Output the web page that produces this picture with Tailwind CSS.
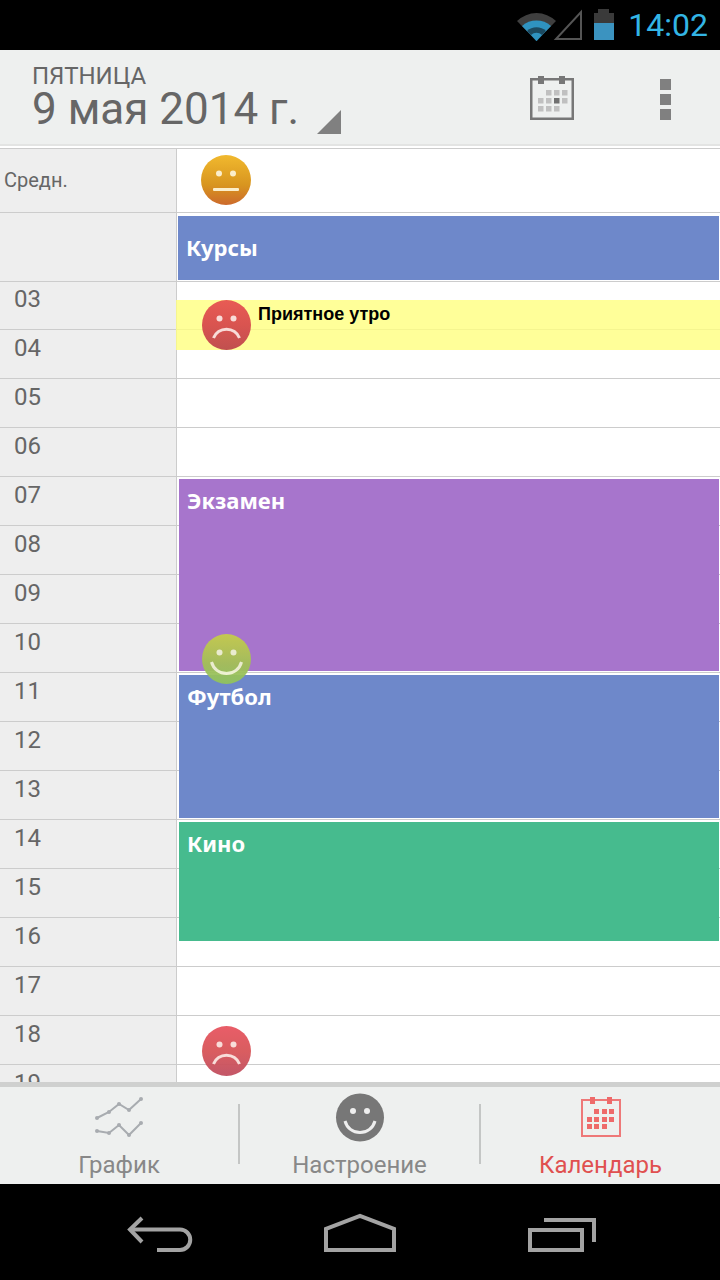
<!DOCTYPE html>
<html lang="ru">
<head>
  <meta charset="UTF-8" />
  <title>Календарь</title>
  <script src="https://cdn.jsdelivr.net/npm/@tailwindcss/browser@4"></script>
</head>
<body class="bg-black font-['Roboto',sans-serif]">
<div class="w-[720px] h-[1280px] flex flex-col overflow-hidden">

  <!-- status bar -->
  <div class="h-[50px] bg-black flex items-center justify-end pr-[12px] shrink-0">
    <svg width="120" height="50" viewBox="510 0 120 50" class="mr-[-6px]">
      <path d="M517 21 A28 28 0 0 1 556 21 L536.500 41 Z" fill="#3f3f3f"/>
      <path d="M522 26 A22 22 0 0 1 551 26 L536.500 41 Z" fill="#2f93c0"/>
      <path d="M527 31 A14 14 0 0 1 546 31 L536.500 41 Z" fill="#1c4a60"/>
      <path d="M531 35 A8 8 0 0 1 542 35 L536.500 41 Z" fill="#2f93c0"/>
      <path d="M581 12 V39 H556 Z" fill="none" stroke="#555" stroke-width="2"/>
      <rect x="598" y="9" width="11" height="4" fill="#3a3a3a"/>
      <rect x="594" y="13" width="20" height="10" fill="#3a3a3a"/>
      <rect x="594" y="23" width="20" height="17" fill="#3b93c0"/>
    </svg>
    <span class="text-[32px] font-normal text-[#33b5e5] leading-none ml-[4px]">14:02</span>
  </div>

  <!-- date header -->
  <div class="h-[94px] bg-[#eef0ef] flex items-start shrink-0 relative">
    <div class="pl-[32px] pt-[13px] text-[#666]">
      <div class="text-[24px] leading-[26px]">ПЯТНИЦА</div>
      <div class="text-[44px] leading-[40px] flex items-end">9 мая 2014 г.</div>
    </div>
    <svg width="24" height="24" class="mt-[60px] ml-[18px]"><path d="M24 0V24H0Z" fill="#808080"/></svg>
    <svg width="46" height="46" viewBox="0 0 46 46" class="absolute left-[529px] top-[25px]">
      <rect x="2.250" y="4.250" width="41.500" height="39.500" fill="none" stroke="#777" stroke-width="2.500"/>
      <rect x="9" y="1" width="6" height="8" fill="#777"/><rect x="30" y="1" width="6" height="8" fill="#777"/>
      <g fill="#c0c0c0">
        <rect x="17" y="15" width="5.500" height="5.500"/><rect x="25" y="15" width="5.500" height="5.500"/><rect x="33" y="15" width="5.500" height="5.500"/>
        <rect x="9" y="23" width="5.500" height="5.500"/><rect x="17" y="23" width="5.500" height="5.500"/><rect x="25" y="23" width="5.500" height="5.500" fill="#707070"/><rect x="33" y="23" width="5.500" height="5.500"/>
        <rect x="9" y="31" width="5.500" height="5.500"/><rect x="17" y="31" width="5.500" height="5.500"/><rect x="25" y="31" width="5.500" height="5.500"/>
      </g>
    </svg>
    <div class="absolute left-[660px] top-[29px] flex flex-col gap-[4px]">
      <div class="w-[11px] h-[11px] bg-[#808080]"></div>
      <div class="w-[11px] h-[11px] bg-[#808080]"></div>
      <div class="w-[11px] h-[11px] bg-[#808080]"></div>
    </div>
  </div>
  <div class="h-[2px] bg-[#e3e4e3] shrink-0"></div>
  <div class="h-[2px] bg-white shrink-0"></div>

  <!-- schedule -->
  <div class="relative h-[934px] bg-white overflow-hidden shrink-0">
    <div class="border-t border-[#ccc]">
      <div class="flex h-[64px] border-b border-[#ccc]">
        <div class="w-[177px] bg-[#eeeeee] border-r border-[#ccc] pl-[4px] pt-[19px] text-[20px] leading-[24px] text-[#666]">Средн.</div>
      </div>
      <div class="flex h-[69px] border-b border-[#ccc]">
        <div class="w-[177px] bg-[#eeeeee] border-r border-[#ccc]"></div>
      </div>
      <div class="flex h-[48px] border-b border-[#ccc]"><div class="w-[177px] bg-[#eeeeee] border-r border-[#ccc] pl-[14px] pt-[3px] text-[24px] leading-[28px] text-[#666]">03</div></div>
      <div class="flex h-[49px] border-b border-[#ccc]"><div class="w-[177px] bg-[#eeeeee] border-r border-[#ccc] pl-[14px] pt-[4px] text-[24px] leading-[28px] text-[#666]">04</div></div>
      <div class="flex h-[49px] border-b border-[#ccc]"><div class="w-[177px] bg-[#eeeeee] border-r border-[#ccc] pl-[14px] pt-[4px] text-[24px] leading-[28px] text-[#666]">05</div></div>
      <div class="flex h-[49px] border-b border-[#ccc]"><div class="w-[177px] bg-[#eeeeee] border-r border-[#ccc] pl-[14px] pt-[4px] text-[24px] leading-[28px] text-[#666]">06</div></div>
      <div class="flex h-[49px] border-b border-[#ccc]"><div class="w-[177px] bg-[#eeeeee] border-r border-[#ccc] pl-[14px] pt-[4px] text-[24px] leading-[28px] text-[#666]">07</div></div>
      <div class="flex h-[49px] border-b border-[#ccc]"><div class="w-[177px] bg-[#eeeeee] border-r border-[#ccc] pl-[14px] pt-[4px] text-[24px] leading-[28px] text-[#666]">08</div></div>
      <div class="flex h-[49px] border-b border-[#ccc]"><div class="w-[177px] bg-[#eeeeee] border-r border-[#ccc] pl-[14px] pt-[4px] text-[24px] leading-[28px] text-[#666]">09</div></div>
      <div class="flex h-[49px] border-b border-[#ccc]"><div class="w-[177px] bg-[#eeeeee] border-r border-[#ccc] pl-[14px] pt-[4px] text-[24px] leading-[28px] text-[#666]">10</div></div>
      <div class="flex h-[49px] border-b border-[#ccc]"><div class="w-[177px] bg-[#eeeeee] border-r border-[#ccc] pl-[14px] pt-[4px] text-[24px] leading-[28px] text-[#666]">11</div></div>
      <div class="flex h-[49px] border-b border-[#ccc]"><div class="w-[177px] bg-[#eeeeee] border-r border-[#ccc] pl-[14px] pt-[4px] text-[24px] leading-[28px] text-[#666]">12</div></div>
      <div class="flex h-[49px] border-b border-[#ccc]"><div class="w-[177px] bg-[#eeeeee] border-r border-[#ccc] pl-[14px] pt-[4px] text-[24px] leading-[28px] text-[#666]">13</div></div>
      <div class="flex h-[49px] border-b border-[#ccc]"><div class="w-[177px] bg-[#eeeeee] border-r border-[#ccc] pl-[14px] pt-[4px] text-[24px] leading-[28px] text-[#666]">14</div></div>
      <div class="flex h-[49px] border-b border-[#ccc]"><div class="w-[177px] bg-[#eeeeee] border-r border-[#ccc] pl-[14px] pt-[4px] text-[24px] leading-[28px] text-[#666]">15</div></div>
      <div class="flex h-[49px] border-b border-[#ccc]"><div class="w-[177px] bg-[#eeeeee] border-r border-[#ccc] pl-[14px] pt-[4px] text-[24px] leading-[28px] text-[#666]">16</div></div>
      <div class="flex h-[49px] border-b border-[#ccc]"><div class="w-[177px] bg-[#eeeeee] border-r border-[#ccc] pl-[14px] pt-[4px] text-[24px] leading-[28px] text-[#666]">17</div></div>
      <div class="flex h-[49px] border-b border-[#ccc]"><div class="w-[177px] bg-[#eeeeee] border-r border-[#ccc] pl-[14px] pt-[4px] text-[24px] leading-[28px] text-[#666]">18</div></div>
      <div class="flex h-[49px] border-b border-[#ccc]"><div class="w-[177px] bg-[#eeeeee] border-r border-[#ccc] pl-[14px] pt-[4px] text-[24px] leading-[28px] text-[#666]">19</div></div>
    </div>

    <!-- events -->
    <div class="absolute left-[178px] top-[68px] w-[541px] h-[64px] bg-[#6e88ca] pl-[8px] pt-[17px] text-white font-bold text-[22px] leading-[28px] font-['Noto_Sans',sans-serif]">Курсы</div>
    <div class="absolute left-[176px] top-[152px] w-[544px] h-[50px] bg-[#ffff80]/80 pl-[82px] pt-[3px] text-black font-bold text-[18px] leading-[22px] font-['Liberation_Sans',sans-serif]">Приятное утро</div>
    <div class="absolute left-[179px] top-[331px] w-[540px] h-[192px] bg-[#a775cc] pl-[8px] pt-[7px] text-white font-bold text-[22px] leading-[28px] font-['Noto_Sans',sans-serif]">Экзамен</div>
    <div class="absolute left-[179px] top-[527px] w-[540px] h-[143px] bg-[#6e88ca] pl-[8px] pt-[7px] text-white font-bold text-[22px] leading-[28px] font-['Noto_Sans',sans-serif]">Футбол</div>
    <div class="absolute left-[179px] top-[674px] w-[540px] h-[119px] bg-[#46bb8e] pl-[8px] pt-[7px] text-white font-bold text-[22px] leading-[28px] font-['Noto_Sans',sans-serif]">Кино</div>

    <!-- mood marks -->
    <svg width="50" height="50" viewBox="0 0 50 50" class="absolute left-[201px] top-[7px]">
      <defs><linearGradient id="n" x1="0" y1="0" x2="0" y2="1"><stop offset="0" stop-color="#f1b92e"/><stop offset="0.6" stop-color="#d8951f"/><stop offset="1" stop-color="#cc6a2c"/></linearGradient></defs>
      <circle cx="25" cy="25" r="25" fill="url(#n)"/>
      <circle cx="18" cy="18.500" r="3" fill="#fbeecb"/><circle cx="32" cy="18.500" r="3" fill="#fbeecb"/>
      <rect x="12" y="33" width="26" height="3" rx="1" fill="#fbeecb"/>
    </svg>
    <svg width="50" height="50" viewBox="0 0 50 50" class="absolute left-[201px] top-[152px]">
      <defs><linearGradient id="s" x1="0" y1="0" x2="0" y2="1"><stop offset="0" stop-color="#e85b54"/><stop offset="0.5" stop-color="#d95450"/><stop offset="1" stop-color="#c0504f"/></linearGradient></defs>
      <ellipse cx="25.500" cy="25" rx="24.500" ry="25" fill="url(#s)"/>
      <circle cx="18.500" cy="18.500" r="3" fill="#f8dcd8"/><circle cx="32.500" cy="18.500" r="3" fill="#f8dcd8"/>
      <path d="M12.500 38 A14 14 0 0 1 38.500 38" fill="none" stroke="#f8dcd8" stroke-width="3"/>
    </svg>
    <svg width="50" height="50" viewBox="0 0 50 50" class="absolute left-[201px] top-[486px] opacity-95">
      <defs><linearGradient id="h" x1="0" y1="0" x2="0" y2="1"><stop offset="0" stop-color="#c6cd4a"/><stop offset="0.6" stop-color="#a3bf58"/><stop offset="1" stop-color="#90c35e"/></linearGradient></defs>
      <ellipse cx="25.500" cy="25" rx="24.500" ry="25" fill="url(#h)"/>
      <circle cx="18.500" cy="18.500" r="3" fill="#eef2d0"/><circle cx="32.500" cy="18.500" r="3" fill="#eef2d0"/>
      <path d="M10.500 28 A15.500 15.500 0 0 0 40.500 28" fill="none" stroke="#eef2d0" stroke-width="3"/>
    </svg>
    <svg width="50" height="50" viewBox="0 0 50 50" class="absolute left-[201px] top-[878px] opacity-95">
      <defs><linearGradient id="s2" x1="0" y1="0" x2="0" y2="1"><stop offset="0" stop-color="#e85560"/><stop offset="0.5" stop-color="#d85558"/><stop offset="1" stop-color="#c04f60"/></linearGradient></defs>
      <ellipse cx="25.500" cy="25" rx="24.500" ry="25" fill="url(#s2)"/>
      <circle cx="18.500" cy="18.500" r="3" fill="#f8dcd8"/><circle cx="32.500" cy="18.500" r="3" fill="#f8dcd8"/>
      <path d="M12.500 38 A14 14 0 0 1 38.500 38" fill="none" stroke="#f8dcd8" stroke-width="3"/>
    </svg>
  </div>

  <!-- tabs -->
  <div class="h-[5px] bg-[#cfd0cf] shrink-0"></div>
  <div class="h-[97px] bg-[#eef0ef] flex shrink-0 relative">
    <div class="w-[238px] flex flex-col items-center">
      <svg width="50" height="44" viewBox="94 1096 50 44" class="mt-[9px]" fill="none" stroke="#a8acb0" stroke-width="2">
        <path d="M97 1118 L109 1112 L119 1104 L129 1110 L141 1099"/>
        <path d="M97 1131 L109 1133 L119 1125 L129 1135 L141 1123"/>
        <g fill="#a8acb0" stroke="none"><circle cx="97" cy="1118" r="2"/><circle cx="109" cy="1112" r="2"/><circle cx="119" cy="1104" r="2"/><circle cx="129" cy="1110" r="2"/><circle cx="141" cy="1099" r="2"/><circle cx="97" cy="1131" r="2"/><circle cx="109" cy="1133" r="2"/><circle cx="119" cy="1125" r="2"/><circle cx="129" cy="1135" r="2"/><circle cx="141" cy="1123" r="2"/></g>
      </svg>
      <span class="text-[24px] leading-[28px] text-[#888] mt-[11px]">График</span>
    </div>
    <div class="w-[2px] h-[60px] bg-[#c4c6c5] mt-[17px]"></div>
    <div class="w-[239px] flex flex-col items-center">
      <svg width="50" height="50" viewBox="0 0 50 50" class="mt-[5px]">
        <circle cx="25" cy="25.500" r="24" fill="#777"/>
        <circle cx="18" cy="19" r="3" fill="#eee"/><circle cx="32" cy="19" r="3" fill="#eee"/>
        <path d="M10 29 A15.500 15.500 0 0 0 40 29" fill="none" stroke="#eee" stroke-width="3"/>
      </svg>
      <span class="text-[24px] leading-[28px] text-[#888] mt-[9px]">Настроение</span>
    </div>
    <div class="w-[2px] h-[60px] bg-[#c4c6c5] mt-[17px]"></div>
    <div class="flex-1 flex flex-col items-center">
      <svg width="42" height="42" viewBox="0 0 42 42" class="mt-[10px]">
        <rect x="2" y="3" width="38" height="36" fill="none" stroke="#ee7878" stroke-width="2"/>
        <rect x="10" y="0" width="5" height="7" fill="#ee6a6a"/><rect x="27" y="0" width="5" height="7" fill="#ee6a6a"/>
        <g fill="#ee6a6a">
          <rect x="14" y="12" width="5" height="5"/><rect x="22" y="12" width="5" height="5"/><rect x="29" y="12" width="5" height="5"/>
          <rect x="7" y="20" width="5" height="5"/><rect x="14" y="20" width="5" height="5"/><rect x="22" y="20" width="5" height="5"/><rect x="29" y="20" width="5" height="5"/>
          <rect x="7" y="27" width="5" height="5"/><rect x="14" y="27" width="5" height="5"/><rect x="22" y="27" width="5" height="5"/>
        </g>
      </svg>
      <span class="text-[24px] leading-[28px] text-[#e05050] mt-[12px]">Календарь</span>
    </div>
  </div>

  <!-- nav bar -->
  <div class="flex-1 bg-black">
    <svg width="720" height="96" viewBox="0 1184 720 96" fill="none" stroke="#a3a3a3" stroke-width="4">
      <path d="M142 1218 L130 1229.500 L142 1242"/>
      <path d="M130 1229.500 H180 A10 10 0 0 1 180 1250 H157"/>
      <path d="M326 1250 V1229 L360 1216 L394 1229 V1250 Z"/>
      <rect x="530" y="1230" width="52" height="20"/>
      <path d="M544 1220 H594 V1242"/>
    </svg>
  </div>
</div>
</body>
</html>
